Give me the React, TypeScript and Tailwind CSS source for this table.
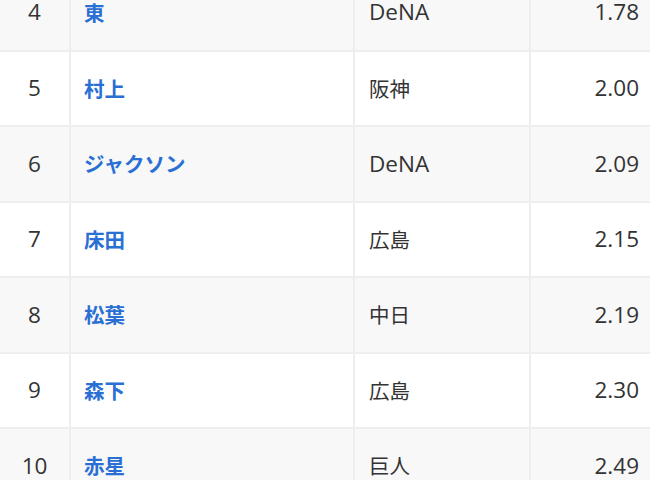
const rows = [
  { rank: 4, name: "東", team: "DeNA", era: "1.78" },
  { rank: 5, name: "村上", team: "阪神", era: "2.00" },
  { rank: 6, name: "ジャクソン", team: "DeNA", era: "2.09" },
  { rank: 7, name: "床田", team: "広島", era: "2.15" },
  { rank: 8, name: "松葉", team: "中日", era: "2.19" },
  { rank: 9, name: "森下", team: "広島", era: "2.30" },
  { rank: 10, name: "赤星", team: "巨人", era: "2.49" },
];

// latin text in the screenshot is a wide, light face; CJK a touch smaller
const latin = "font-['Open_Sans',sans-serif] text-[22.5px]";
const cjk = "font-['Noto_Sans_CJK_JP',sans-serif] text-[20.5px]";

export default function App() {
  return (
    <div className="w-[650px] h-[480px] overflow-hidden bg-white text-[#333]">
      <table className="-mt-[25px] w-[650px] border-collapse table-fixed">
        <colgroup>
          <col className="w-[70px]" />
          <col className="w-[284px]" />
          <col className="w-[176px]" />
          <col />
        </colgroup>
        <tbody>
          {rows.map((r) => (
            <tr
              key={r.rank}
              className={
                r.rank % 2 === 0
                  ? "h-[75.5px] bg-[#f8f8f8] border-b-2 border-[#eeeeee]"
                  : "h-[75.5px] bg-white border-b-2 border-[#eeeeee]"
              }
            >
              <td className={`text-center border-r-2 border-[#eeeeee] p-0 ${latin}`}>{r.rank}</td>
              <td className={`pl-[13px] border-r-2 border-[#eeeeee] font-bold text-[#2a6fd3] ${cjk}`}>
                {r.name}
              </td>
              <td
                className={`pl-[14px] border-r-2 border-[#eeeeee] ${
                  r.team === "DeNA" ? latin : cjk
                }`}
              >
                {r.team}
              </td>
              <td className={`pr-[11px] text-right ${latin}`}>{r.era}</td>
            </tr>
          ))}
        </tbody>
      </table>
    </div>
  );
}
